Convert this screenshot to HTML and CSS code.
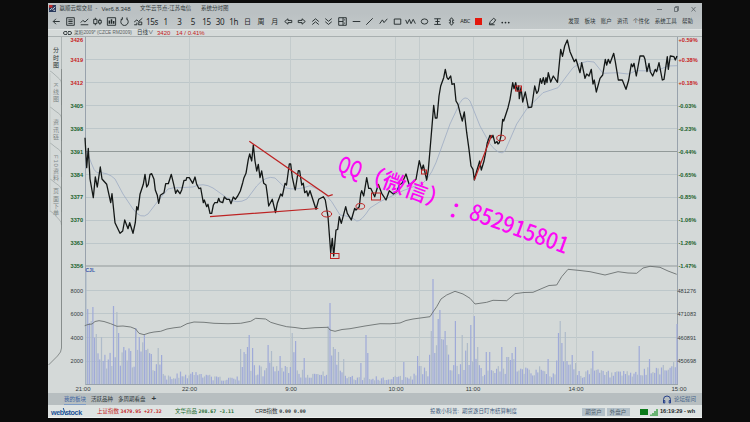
FILE: index.html
```html
<!DOCTYPE html>
<html lang="zh-CN">
<head>
    <meta charset="UTF-8">
    <title>系统分时图</title>
    <link rel="stylesheet" href="styles.css">
</head>
<body>
    <div class="window">
        <header class="titlebar">
            <svg class="logo" viewBox="0 0 8 8">
                <rect width="8" height="8" fill="#28395c"/>
                <path d="M0 0h4v3H0z" fill="#c22a2a"/>
                <path d="M1 6l2-2 1 1 3-3M5 6h2" stroke="#e8eef2" fill="none"/>
            </svg>
            <span class="t-app">赢顺云端交易</span>
            <span class="t-dash">-</span>
            <span class="t-ver">Ver6.8.348</span>
            <span class="t-node">文华云节点-江苏电信</span>
            <span>系统分时图</span>
            <svg class="controls" viewBox="0 0 44 8">
                <path d="M3 4.5h5M20.5 2.5h3v4h-3zM21.5 2.5v-1h3v4h-1M37.500 2l4 4.500M41.500 2l-4 4.500"/>
            </svg>
        </header>

        <div class="toolbar">
            <div class="tools">
                <span><svg viewBox="0 0 12 12"><path d="M9 6H3M5.500 3.500L3 6l2.500 2.500"/></svg></span>
                <span><svg viewBox="0 0 12 12"><path d="M2.500 2.500h7v7h-7zM4 4.500h4M4 6h4M4 7.700h4"/></svg></span>
                <span><svg viewBox="0 0 12 12"><path d="M2.500 7l2-2 2 1.500 3-3M2.500 9h7"/></svg></span>
                <span><svg viewBox="0 0 12 12"><path d="M2.500 4h3v4h-3zM4 2.500v1.500M4 8v1.500M7 5h2.500v2.500H7zM8.200 3.500V5M8.200 7.500V9"/></svg></span>
                <span><svg viewBox="0 0 12 12"><path d="M2.200 2.500h7.600v7H2.200z"/><path d="M4 8V5M6 8V4M8 8V5.500" stroke-width="1.400"/></svg></span>
                <span><svg viewBox="0 0 12 12"><path d="M4 3.500A3.400 3.400 0 1 0 8 3.500M4 2v2H2.500M8.300 2.300v2"/></svg></span>
                <span><svg viewBox="0 0 12 12"><path d="M2 6.500l2.500-2L6 6l3.500-3M2 9h2.500V7M6 9h3V6.500H6.500z"/></svg></span>
                <span>15s</span>
                <span>1</span>
                <span>3</span>
                <span>5</span>
                <span>15</span>
                <span>30</span>
                <span>1h</span>
                <span class="cn">日</span>
                <span class="cn">周</span>
                <span class="cn">月</span>
                <span><svg viewBox="0 0 12 12"><path d="M2.500 6L5.500 3.500V5H9v2H5.500v1.500z"/></svg></span>
                <span><svg viewBox="0 0 12 12"><path d="M9.500 6L6.500 3.500V5H3v2h3.500v1.500z"/></svg></span>
                <span><svg viewBox="0 0 12 12"><path d="M3 6l3-2.500L9 6M3 8.800l3-2.500 3 2.500"/></svg></span>
                <span><svg viewBox="0 0 12 12"><path d="M3 3.300l3 2.500 3-2.500M3 6.200l3 2.500 3-2.500"/></svg></span>
                <span><svg viewBox="0 0 12 12"><path d="M2.500 2.500h7v7h-7zM6.500 2.500v7M2.500 6h4M8 4v1M8 7v1"/></svg></span>
                <span><svg viewBox="0 0 12 12"><path d="M2.500 6h7"/></svg></span>
                <span><svg viewBox="0 0 12 12"><path d="M3 9l6-6"/></svg></span>
                <span><svg viewBox="0 0 12 12"><path d="M2.500 8L5 4.500 6.500 7 9.500 3.500"/></svg></span>
                <span><svg viewBox="0 0 12 12"><path d="M3 3.700h6v4.800H3z"/></svg></span>
                <span><svg viewBox="0 0 12 12"><path d="M1.500 4.500L3 8l2-4 1.500 4 2-4L10.500 8"/></svg></span>
                <span><svg viewBox="0 0 12 12"><ellipse cx="6" cy="6" rx="3" ry="2.400"/></svg></span>
                <span><svg viewBox="0 0 12 12"><path d="M3 3.500h6M3 8.700h6M6 3.500v5.200M4 6h4"/></svg></span>
                <span><svg viewBox="0 0 12 12"><path d="M6 2.500L4 5h1v2H4l2 2.500 2-2.500H7V5h1z"/></svg></span>
                <span class="abc">ABC</span>
                <span><i class="swatch"></i></span>
                <span><svg viewBox="0 0 12 12"><path d="M3 8.500l1-2.500 3-3 2 1.500L6.500 8zM3 9h5"/></svg></span>
                <span><svg viewBox="0 0 12 12" class="dots"><circle cx="3" cy="7" r=".8"/><circle cx="6" cy="7" r=".8"/><circle cx="9" cy="7" r=".8"/></svg></span>
            </div>
            <nav class="menu">
                <span>发现</span><span>板块</span><span>账户</span><span>资讯</span><span>个性化</span><span>系统工具</span><span>帮助</span>
            </nav>
        </div>

        <div class="quote">
            <svg class="link" viewBox="0 0 9 6"><path d="M4 1.500H2a1.500 1.500 0 0 0 0 3h2M5 1.500h2a1.500 1.500 0 0 1 0 3H5M3 3h3"/></svg>
            <span class="q-name">菜粕2009* (CZCE RM2009)</span>
            <span class="q-period">日线∨</span>
            <span class="q-price">3420</span>
            <span class="q-price">14 / 0.41%</span>
        </div>

        <main class="main">
            <aside class="side">
                <svg class="side-lines" viewBox="48 37 14 356">
                    <path d="M61.500 37V69M50 71q2 1 4 3l5.500 5q2 2 2 4V105M50 107q2 1 4 3l5.500 4q2 2 2 4V141M50 143q2 1 4 3l5.500 4q2 2 2 4V177M50 179q2 1 4 3l5.500 4q2 2 2 4V212M50 211q2 1 4 3l5.500 6q2 2 2 5" stroke="#a3abab"/>
                    <path d="M50 73V212" stroke="#bcc3c2"/>
                    <path d="M61.500 69V348q0 4-4 8l-9 9" stroke="#737a79"/>
                </svg>
                <span class="tab active">分时图</span>
                <span class="tab">K线图</span>
                <span class="tab">资讯链</span>
                <span class="tab f10">F10资料</span>
                <span class="tab">页面下单</span>
            </aside>

            <svg class="chart" viewBox="62 37 640 356">
                <g class="grid">
                    <path d="M85 59.500H678M85 82.500H678M85 105.500H678M85 128.500H678M85 174.500H678M85 197.500H678M85 220.500H678M85 243.500H678M85 290.500H678M85 313.500H678M85 337.500H678M85 361.500H678"/>
                    <path class="vert" d="M189.500 37V384M290.500 37V384M395.500 37V384M419.500 37V384M473.500 37V384M523.500 37V384M576.500 37V384"/>
                    <path class="strong" d="M85 151.500H678M85 266H678"/>
                    <path class="frame" d="M85.500 37V384.500H678M677.500 37V384"/>
                </g>

                <g id="volume"></g>

                <polyline class="oi" points="84.7,325.7 88,324.5 92,324 95,321.500 99,320.7 104,321.500 110.7,323.7 117,326.3 123,326 130.7,327 135.7,329 139,333.3 144,334.7 149,333 154,332 160.7,331.3 167,329 174,327.800 180.7,327 187,323.7 194,322 204,322.300 214,323.3 228,323.700 240.7,323.3 250.7,321.3 255.7,318.3 265.7,319 270.7,322.3 278,324.500 286.7,326.7 295,327.500 303,328.7 315,327.700 328,327.3 330,330 335,331.3 342,329.500 350,328.7 365,326 380,323.7 390,323.800 400,323 406,320.500 413,319 430,316.7 433,312 436.7,306.7 441,299 446.7,295 455,291.3 463,294 470,298.3 475,304 486.7,302.3 493,300.3 506.7,300.7 515,293.7 524,292.500 533,292.3 543,288 549,285.500 556.7,285 561.7,276.7 568,269.3 580,270.500 590,271.7 605,275 618,271.7 628,273 636.7,273.3 643,268 650,266.3 660,267.3 668,271 676.7,274.3"/>

                <path class="ma" d="M86.700 151L91.700 164Q94 171 97 172.700Q108 172 115 179L123 194 133 209Q141 220 148 214L158 201 168 189Q174 187 180 187.700L193 187Q203 182 213 188L226.700 197.700Q237 205 247 199L256.700 186Q266 175 275 178L285 187.700Q296 191 310 185.700L323 191.700 331.700 201.700 340 215Q351 216 356.700 221Q361 222 370 208L380 201.700 403 190.700 423 183Q432 176 440 151.700L450 124 460 102.700Q465 94 470 101L480 126 490 144Q500 157 505 151L516.700 124 526.700 109 543 92.700 558 87.700 566.700 76 573 67.700 580 63.300Q588 60 594 62L603 73.300 616.700 72.700 628 74 636.700 70.700 656 71 668 66 677 65.700"/>

                <polyline class="price" points="85,137.7 86.7,167.7 88.3,148.3 90,179 93.3,197.7 95.3,177 97.3,187 100.3,167 102,179 106.7,184.3 110.7,202.7 112,193.7 115,222.7 120,233.3 122.7,231 124.7,220 128,228.7 129.7,222.7 133,233.3 135.3,222.7 136.7,206.7 138,210 140,194.3 143.3,184.3 145,174.3 146.7,187 148.3,184.3 150,174.3 151.7,173.7 154,179.3 155.3,190 157.3,195.3 158.7,203.3 160.3,195.3 164,192.7 165.7,183.7 168.3,183.7 171.3,174.3 173.7,184.3 175.7,193.3 177.3,190 180,193.7 181.7,190 184,180.3 186,180.3 186.7,177.7 189.3,177.7 192.7,183.3 195,177 196.7,184.3 199,188.7 200.7,188 203.3,202.7 204.3,200 206.7,206.7 208,204.3 210,213.3 211.7,213.3 213.3,205.3 214.7,202.7 217.3,202.7 218.7,198.3 220,201.7 222.7,202.7 224.3,197 226.7,199.3 229.3,199.3 231,203.7 233.3,197 235.3,199.3 237.7,196 240.3,191 242.7,182.7 244,177.7 246,173.3 248.3,159.3 249.7,154 251.7,161 253.3,145 255,161 256.7,171 258.3,164.3 260,177.7 261.7,171 263.7,183.3 266,185 267.3,194.3 268.7,206 272.3,199.3 275.5,212.7 277.3,203.3 280.7,194 282.3,196 285,183.3 286.5,185 289.3,164 290.7,164 292.3,177.3 294.3,186.7 295.3,190 298.3,170.7 299.7,171 301.7,185 303.3,183.3 304.7,192.7 306.7,191 308,196 310,190.7 316,209.3 318.7,199.3 323.3,196.7 325.3,200 328,216.7 330,243.3 330.7,252.7 332.3,238.3 333.7,256 336,230 337.7,229.3 339.3,216.7 341.3,223.3 345.7,206.7 347.3,213.3 351.3,220 354.7,208.3 356,210 359.3,206.7 360.7,194 361.7,190.7 363.7,196 366.7,177.7 368.7,188.3 370.7,188.3 374.7,196.7 378.3,184.3 381.7,193.3 386,200 389.3,190.7 393.3,194 396.7,191.7 399.3,185 402,183.3 406,174 409.3,185 412.7,182.7 416,179.3 419.3,160.7 421.7,170 423.3,165 426.7,180 428.3,170 430,150 432,126 433.7,105.3 435.3,118 437,118 439,96 440.7,86 443.7,77.7 445.3,69.3 447,77.7 448.3,79.3 450.7,76 452,84.3 454.3,83.7 456,101 458,104.3 460,112.7 462.3,121 464.3,112 466.7,132.7 469,149.3 471,166 473,169.3 474.3,180 476.7,171 479.7,161 481.3,170 484,161 485.3,154.3 487.3,142.7 490,135.3 491.7,137.7 493,135.3 495,143.3 497,141.500 498,144 499.3,142.7 501,136 502.7,119.3 503.7,121 508,107.7 510,99.3 512.7,82.7 514,88.7 515.7,82.7 517.3,91 518.7,86 519.3,98.7 521,87.7 522.7,102 525.3,92 528.3,107.7 531.7,107 534.7,86 536.7,93.3 538.3,91 540.3,78.7 541.7,83.3 543.3,77.7 544.7,84.3 546,77.7 547,82.7 548.3,72.7 550.7,82 553.3,76 557.5,82.3 560.7,49.3 562.5,56.3 564.7,46 567.3,40 570,51.7 574.3,61.7 576,59.3 580,72.7 581.7,62.7 585,78.3 586.7,74 589,76 591.3,69.3 593,84 594.3,80 596.3,92 600,78.3 602.7,75 605.3,59.3 606.7,65 608.3,59.3 610,63.3 613.7,53.3 615.3,61.7 618.3,80 622.3,80 626,89.3 628.7,80 631.3,64 632.7,66.7 634,63.3 636.3,76 640,56 643.7,56 645,59.3 647,71.7 649,63.3 650.3,71.7 652.7,76 655.3,69.3 656.7,71.7 659,62.7 662.3,80 664,79.3 667.3,56.7 668.3,69.3 670.3,56 674,56.7 675.3,60 677,56"/>

                <g class="marks">
                    <path d="M249.300 141.300L328.300 196 332.700 194.700M210 216.700L318.300 208.500M474.300 180L491.700 135" stroke-width="1.200"/>
                    <ellipse cx="326.700" cy="214" rx="5" ry="3"/>
                    <ellipse cx="360.300" cy="206.300" rx="4.300" ry="2.800"/>
                    <ellipse cx="501" cy="138" rx="4.300" ry="2.800"/>
                    <rect x="330.500" y="253.500" width="8.500" height="5"/>
                    <rect x="371.500" y="193" width="9" height="7"/>
                    <rect x="421.500" y="170" width="5" height="4"/>
                    <rect x="515.500" y="86" width="6" height="5"/>
                </g>

                <g class="labels left">
                    <g class="up">
                        <text x="83" y="42">3426</text>
                        <text x="83" y="62">3419</text>
                        <text x="83" y="85">3412</text>
                    </g>
                    <g class="down">
                        <text x="83" y="108">3405</text>
                        <text x="83" y="130.500">3398</text>
                        <text x="83" y="153.500">3391</text>
                        <text x="83" y="176.500">3384</text>
                        <text x="83" y="199">3377</text>
                        <text x="83" y="222">3370</text>
                        <text x="83" y="245">3363</text>
                        <text x="83" y="268">3356</text>
                    </g>
                    <g class="plain">
                        <text x="83" y="292.500">8000</text>
                        <text x="83" y="316">6000</text>
                        <text x="83" y="339.500">4000</text>
                        <text x="83" y="363">2000</text>
                    </g>
                </g>
                <g class="labels right">
                    <g class="up">
                        <text x="678.500" y="42">+0.59%</text>
                        <text x="678.500" y="62">+0.38%</text>
                        <text x="678.500" y="85">+0.18%</text>
                    </g>
                    <g class="down">
                        <text x="678.500" y="108">-0.03%</text>
                        <text x="678.500" y="130.500">-0.23%</text>
                        <text x="678.500" y="153.500">-0.44%</text>
                        <text x="678.500" y="176.500">-0.65%</text>
                        <text x="678.500" y="199">-0.85%</text>
                        <text x="678.500" y="222">-1.06%</text>
                        <text x="678.500" y="245">-1.26%</text>
                        <text x="678.500" y="268">-1.47%</text>
                    </g>
                    <g class="plain">
                        <text x="677.500" y="292.500">481276</text>
                        <text x="677.500" y="316">471083</text>
                        <text x="677.500" y="339.500">460891</text>
                        <text x="677.500" y="363">450698</text>
                    </g>
                </g>
                <g class="labels time plain">
                    <text x="83" y="391">21:00</text>
                    <text x="189.500" y="391">22:00</text>
                    <text x="291" y="391">9:00</text>
                    <text x="396" y="391">10:00</text>
                    <text x="473" y="391">11:00</text>
                    <text x="576" y="391">14:00</text>
                    <text x="679" y="391">15:00</text>
                </g>
                <text class="cjl" x="85.500" y="272">CJL</text>

                <g class="watermark" transform="translate(336.200 170.700) rotate(20)">
                    <text x="0" y="0" textLength="24" lengthAdjust="spacingAndGlyphs">QQ</text>
                    <text x="24" y="0" textLength="93" lengthAdjust="spacingAndGlyphs">（微信）</text>
                    <text x="119" y="4">：</text>
                    <text x="140" y="0" textLength="104" lengthAdjust="spacingAndGlyphs">852915801</text>
                </g>
            </svg>
        </main>

        <div class="boards">
            <span class="board active">我的板块</span>
            <span class="board">活跃品种</span>
            <span class="board">多周期看盘</span>
            <span class="plus">+</span>
            <span class="forum">
                <svg viewBox="0 0 10 9"><path d="M1.500 6V4.500a3.500 3.500 0 0 1 7 0V6M1.500 5.500h1.300V8H1.500zM7.200 5.500h1.300V8H7.200z"/></svg>
                论坛提问
            </span>
        </div>

        <footer class="status">
            <span class="brand">web<i></i>stock</span>
            <span class="s-up">上证指数 <b>3479.95 +27.32</b></span>
            <span class="s-down">文华商品 <b>208.67 -3.11</b></span>
            <span class="s-flat">CRB指数 <b>0.00 0.00</b></span>
            <span class="news">投教小科普:&nbsp; 期货逐日盯市结算制度</span>
            <span class="account">期货户</span>
            <span class="account">外盘户</span>
            <i class="led"></i>
            <svg class="signal" viewBox="0 0 8 8"><path d="M1 8V6.500M3 8V5M5 8V3M7 8V1"/></svg>
            <span class="clock">16:19:29 - wh</span>
        </footer>
    </div>

    <script>
        // 成交量: 345 根一分钟柱
        const LEFT = 86, BASE = 384, STEP = 591 / 344;

        // [x, 平均高度]
        const level = [
            [86, 60], [96, 42], [100, 26], [110, 26], [114, 48], [120, 32], [133, 28], [137, 40],
            [147, 36], [151, 22], [163, 16], [165, 8], [180, 11], [205, 11], [216, 6], [239, 6],
            [241, 26], [252, 26], [256, 16], [266, 14], [269, 24], [278, 16], [289, 18], [292, 34],
            [297, 28], [299, 12], [326, 10], [328, 38], [338, 22], [346, 10], [355, 7], [385, 6],
            [412, 8], [418, 16], [428, 15], [432, 48], [446, 40], [450, 16], [460, 20], [470, 34],
            [478, 24], [482, 13], [505, 15], [513, 30], [522, 18], [550, 12], [556, 10], [558, 42],
            [574, 24], [577, 12], [598, 13], [612, 10], [640, 11], [660, 17], [678, 22]
        ];

        // [x, 高度]
        const peaks = [
            [86, 113], [88.3, 75], [91.3, 63], [93.3, 77], [95.7, 50], [102.3, 47], [114.3, 78],
            [117.3, 72], [119, 51], [123.3, 37], [131.3, 33], [136, 56], [139.7, 47], [145, 49],
            [151.3, 30], [158.3, 36], [162.3, 29], [241.3, 35], [245, 30], [247.7, 37], [249.7, 49],
            [252.7, 36], [268.7, 39], [272, 33], [280.7, 28], [292.3, 51], [296, 43], [304.3, 26],
            [328.7, 58], [330.5, 81], [333.3, 37], [335.3, 35], [339, 32], [343.7, 25], [361.3, 21],
            [366.3, 49], [368.3, 31], [404, 22], [418.3, 28], [431.7, 53], [433.5, 105], [438.7, 65],
            [440.5, 74], [445.3, 53], [455.7, 63], [462.3, 49], [467.3, 41], [471, 59], [474.3, 68],
            [478, 37], [486.7, 32], [490, 32], [502, 37], [507.5, 27], [512.7, 31], [515.3, 37],
            [548.3, 25], [558.5, 51], [560.3, 63], [562, 41], [565.7, 52], [572.3, 29], [593.3, 33],
            [639, 38], [650, 25], [677, 60]
        ];

        function levelAt(x) {
            for (let i = 1; i < level.length; i++) {
                if (x <= level[i][0]) {
                    const [x0, h0] = level[i - 1];
                    const [x1, h1] = level[i];
                    return h0 + (h1 - h0) * (x - x0) / (x1 - x0);
                }
            }
            return level[level.length - 1][1];
        }

        let bars = '';
        let seed = 17;
        for (let i = 0; i < 345; i++) {
            const x = LEFT + i * STEP;
            seed = (seed * 16807) % 2147483647;
            const r = seed / 2147483647;
            let h = levelAt(x) * (0.5 + 0.75 * r);
            const peak = peaks.find(p => Math.abs(p[0] - x) < STEP / 2 + 0.01);
            if (peak) h = peak[1];
            bars += `<rect class="${i % 3 ? 'bar' : 'bar dim'}" x="${(x - 0.6).toFixed(1)}" y="${(BASE - h).toFixed(1)}" width="1.2" height="${h.toFixed(1)}"/>`;
        }
        document.getElementById('volume').innerHTML = bars;
    </script>
</body>
</html>
```
FILE: styles.css
```css
body {
    margin: 0;
    height: 422px;
    box-sizing: border-box;
    padding: 3px 48px 0;
    overflow: hidden;
    background: #0c0c0c;
    font-family: "Liberation Sans", "Noto Sans CJK SC", sans-serif;
    font-size: 5.5px;
    color: #30383a;
}

svg {
    display: block;
}

span {
    white-space: nowrap;
}

.window {
    width: 654px;
    height: 415px;
    display: flex;
    flex-direction: column;
    background: #d4d9d8;
    line-height: 1;
}

/* 标题栏 */
.titlebar {
    height: 11px;
    display: flex;
    align-items: center;
    padding-left: 1px;
    background: #bbc1c3;
}

.logo {
    width: 7px;
    height: 7px;
    margin-right: 3.5px;
}

.t-app {
    width: 36px;
}

.t-dash {
    width: 6px;
}

.t-ver {
    width: 38.5px;
    font-size: 6px;
}

.t-node {
    width: 61px;
}

.controls {
    width: 44px;
    height: 8px;
    margin-left: auto;
    margin-right: 4px;
    fill: none;
    stroke: #596164;
    stroke-width: .8;
}

/* 工具栏 */
.toolbar {
    height: 15px;
    display: flex;
    align-items: center;
    justify-content: space-between;
    background: linear-gradient(#bbc1c3, #c3c9ca);
}

.tools {
    display: flex;
    padding-left: 2px;
    font-family: "Noto Sans", sans-serif;
    font-size: 8px;
    color: #1d2425;
}

.tools span {
    width: 13.61px;
    height: 13px;
    display: flex;
    align-items: center;
    justify-content: center;
    letter-spacing: -.3px;
}

.tools .cn {
    font-family: "Noto Sans CJK SC", sans-serif;
    font-size: 7px;
}

.tools .abc {
    font-size: 5.5px;
}

.tools svg {
    width: 13px;
    height: 13px;
    fill: none;
    stroke: #22292a;
    stroke-width: .85;
}

.tools .dots {
    fill: #22292a;
    stroke: none;
}

.swatch {
    width: 7px;
    height: 7px;
    background: #e3170c;
}

.menu {
    display: flex;
    gap: 5.2px;
    padding-right: 9px;
}

/* 合约信息 */
.quote {
    height: 8px;
    display: flex;
    align-items: center;
    padding-left: 15px;
    background: #d5dad9;
    border-top: 1px solid #dfe3e3;
    border-bottom: 1px solid #a9b0b0;
    box-sizing: border-box;
}

.link {
    width: 9px;
    height: 6px;
    margin-right: 2px;
    fill: none;
    stroke: #3c4446;
}

.q-name {
    width: 63px;
    font-size: 4.7px;
    color: #5b6364;
}

.q-period {
    width: 20px;
}

.q-price {
    width: 19px;
    font-size: 6px;
    color: #c32020;
}

/* 主体 */
.main {
    height: 356px;
    display: flex;
}

.side {
    position: relative;
    width: 14px;
    box-sizing: border-box;
    padding: 10px 0 0 1px;
    display: flex;
    flex-direction: column;
    align-items: center;
}

.side-lines {
    position: absolute;
    left: 0;
    top: 0;
    width: 14px;
    height: 356px;
    fill: none;
    stroke-width: .8;
}

.tab {
    height: 36px;
    writing-mode: vertical-rl;
    font-size: 6px;
    letter-spacing: 1.3px;
    color: #7f8888;
}

.tab.active {
    color: #2e3537;
}

.tab.f10 {
    height: 33px;
    letter-spacing: .8px;
}

.chart {
    width: 640px;
    height: 356px;
}

.chart path,
.chart polyline {
    fill: none;
}

.grid path {
    stroke: #bdc7ca;
}

.grid .vert {
    stroke: #c3cbcc;
}

.grid .strong {
    stroke: #929a99;
    stroke-width: 1.2;
}

.grid .frame {
    stroke: #98a2ac;
}

.bar {
    fill: #9faad8;
}

.bar.dim {
    fill: #aebbc9;
}

.oi {
    stroke: #6b7070;
    stroke-width: .9;
}

.ma {
    stroke: #9dabc3;
    stroke-width: .8;
}

.price {
    stroke: #131716;
    stroke-width: 1.3;
    stroke-linejoin: round;
}

.marks {
    fill: none;
    stroke: #bd2323;
    stroke-width: 1;
}

.labels {
    font-family: "Liberation Sans", sans-serif;
    font-size: 5.6px;
}

.left {
    text-anchor: end;
}

.time {
    text-anchor: middle;
    font-size: 6px;
}

.up {
    fill: #c71c1c;
    font-weight: bold;
}

.down {
    fill: #17602a;
    font-weight: bold;
}

.plain {
    fill: #343c3e;
}

.cjl {
    font-size: 5px;
    font-weight: bold;
    fill: #3556a8;
}

.watermark {
    font-family: "Noto Sans CJK SC", sans-serif;
    font-size: 22.5px;
    font-weight: 500;
    fill: #fb0af5;
}

/* 板块标签 */
.boards {
    height: 12px;
    display: flex;
    align-items: center;
    padding-left: 16px;
    background: #b7bec0;
}

.board {
    height: 12px;
    line-height: 13px;
    margin-right: 5px;
}

.board.active {
    color: #3c64a0;
    box-shadow: inset 0 -1px #7e9cc4;
}

.plus {
    margin-left: 1px;
    font-size: 8px;
    font-weight: bold;
}

.forum {
    display: flex;
    align-items: center;
    gap: 2px;
    margin-left: auto;
    margin-right: 6px;
    padding-top: 1px;
    color: #3f5f87;
}

.forum svg {
    width: 10px;
    height: 9px;
    fill: none;
    stroke: #27418a;
}

/* 状态栏 */
.status {
    flex: 1;
    display: flex;
    align-items: center;
    padding: 2px 0 0 3px;
    background: #dee3e2;
    border-bottom: 1px solid #eef1f0;
}

.status b {
    font-family: "DejaVu Sans Mono", monospace;
    font-size: 4.9px;
}

.brand {
    width: 46px;
    font-size: 7.2px;
    font-weight: bold;
    letter-spacing: -.4px;
    color: #1c5296;
}

.brand i {
    display: inline-block;
    width: 1.2px;
    height: 7px;
    background: #1c5296;
    transform: skewX(20deg);
}

.s-up {
    width: 78px;
    color: #c32020;
}

.s-down {
    width: 80px;
    color: #1b6a2d;
}

.s-flat {
    width: 175px;
    color: #2c3234;
}

.news {
    width: 152px;
    color: #40597c;
}

.account {
    width: 23px;
    height: 8px;
    line-height: 8px;
    margin-right: 1.5px;
    text-align: center;
    background: #b3c0c8;
    color: #4a5b68;
}

.led {
    width: 8px;
    height: 6px;
    margin-left: 9px;
    background: #0c7a1b;
}

.signal {
    width: 8px;
    height: 8px;
    margin: 0 2px;
    stroke: #2a9a35;
    stroke-width: 1.300;
}

.clock {
    font-size: 5.6px;
    font-weight: bold;
    color: #23292a;
}
```
